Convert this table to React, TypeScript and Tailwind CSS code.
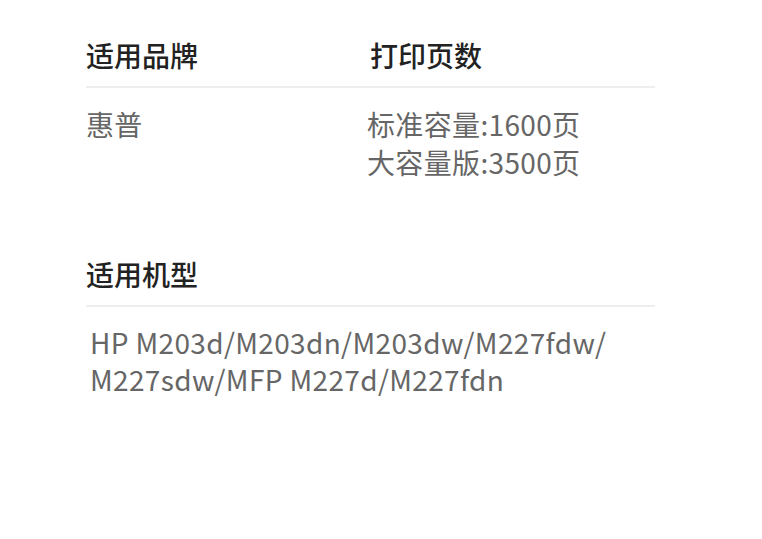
export default function App() {
  return (
    <div
      className="w-[762px] h-[539px] bg-white pl-[86px] pr-[107px] pt-[36px]"
      style={{ fontFamily: '"Noto Sans CJK SC", "Noto Sans", sans-serif' }}
    >
      {/* Brand / page yield */}
      <div className="grid grid-cols-[282px_1fr] border-b-2 border-[#eeeeee] pb-[12px]">
        <div className="text-[28px] leading-[38px] font-medium text-[#222222]">适用品牌</div>
        <div className="text-[28px] leading-[38px] font-medium text-[#222222] pl-[2px]">打印页数</div>
      </div>
      <div className="grid grid-cols-[281px_1fr] pt-[17px]">
        <div className="text-[28px] leading-[38px] tracking-[0.35px] text-[#666666]">惠普</div>
        <div className="text-[28px] leading-[38px] tracking-[0.35px] text-[#666666]">
          <div>标准容量:1600页</div>
          <div>大容量版:3500页</div>
        </div>
      </div>

      {/* Models */}
      <div className="mt-[74px] border-b-2 border-[#eeeeee] pb-[12px]">
        <div className="text-[28px] leading-[38px] font-medium text-[#222222]">适用机型</div>
      </div>
      <div className="pt-[17px] pl-[4px] text-[28px] leading-[37px] tracking-[0.35px] text-[#666666]">
        HP M203d/M203dn/M203dw/M227fdw/
        <br />
        M227sdw/MFP M227d/M227fdn
      </div>
    </div>
  );
}
